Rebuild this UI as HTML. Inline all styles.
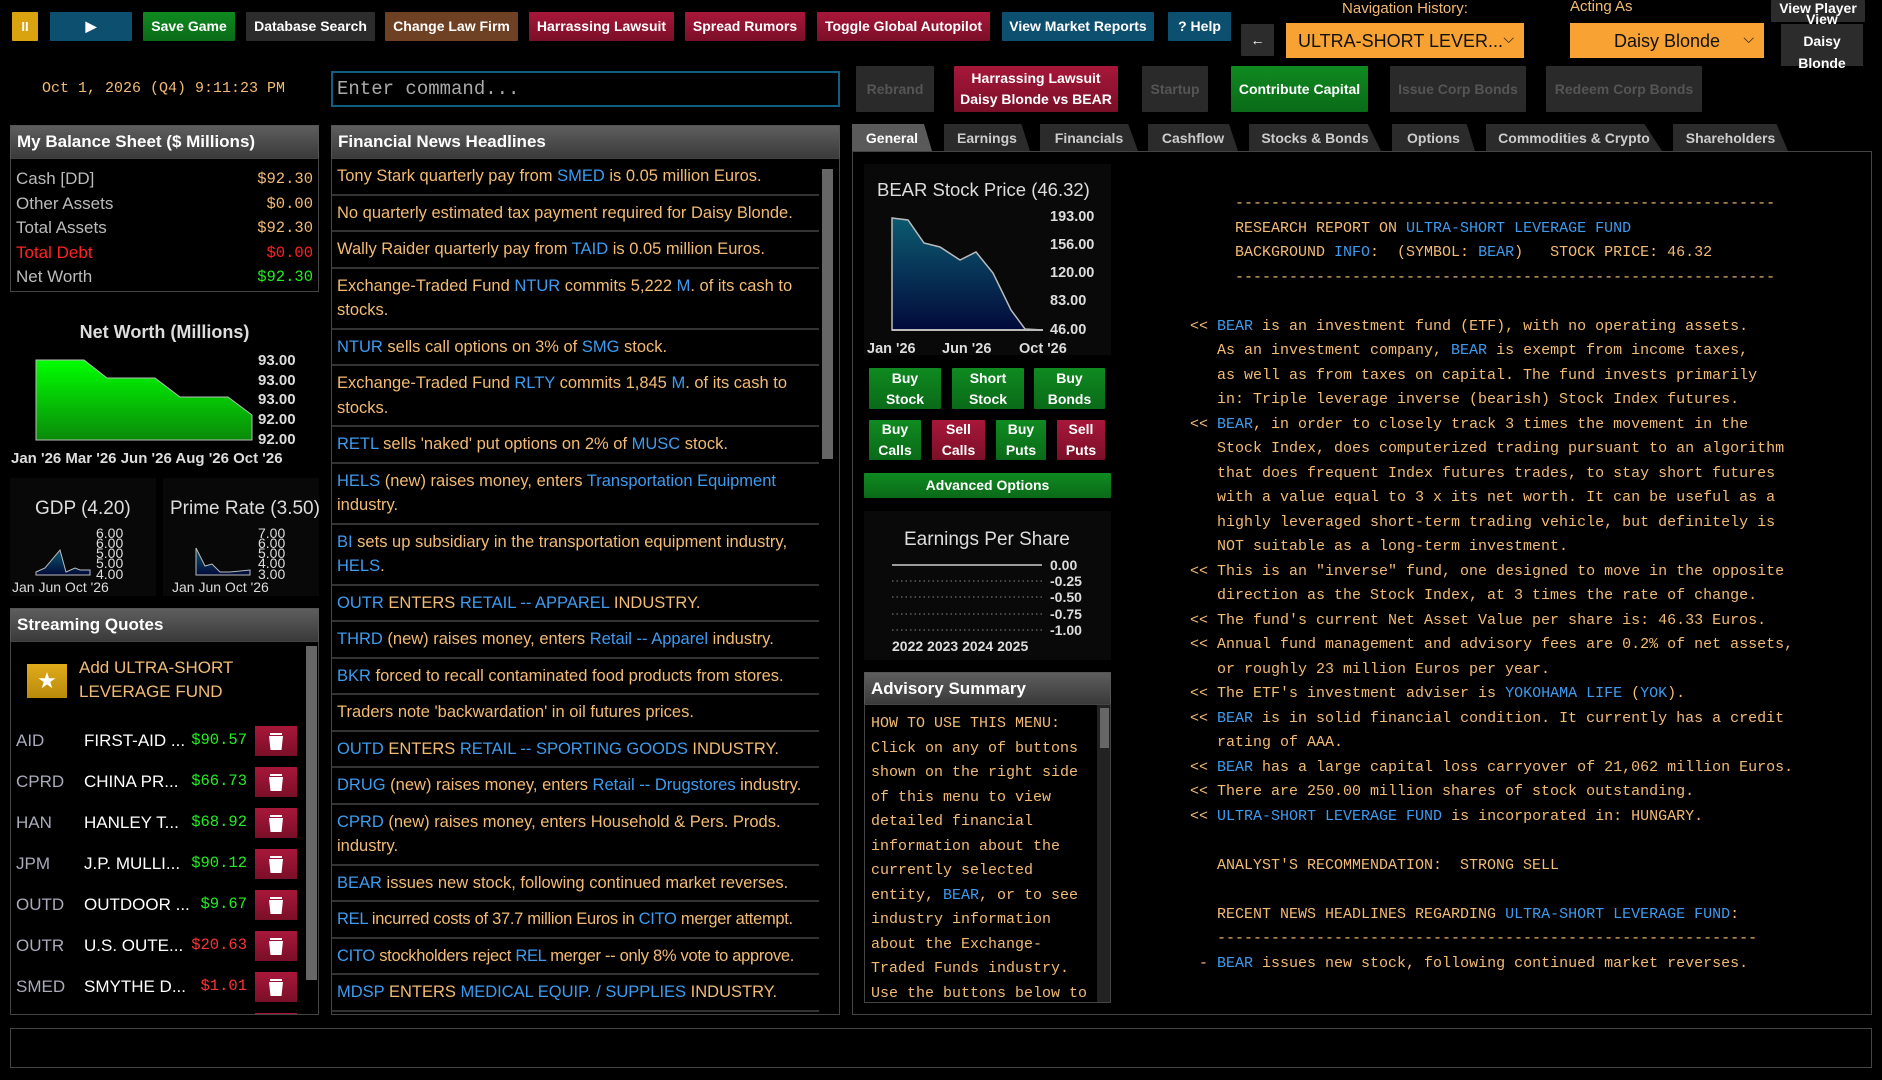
<!DOCTYPE html>
<html><head><meta charset="utf-8"><style>
*{box-sizing:border-box;margin:0;padding:0}
body{width:1882px;height:1080px;background:#000;position:relative;overflow:hidden;font-family:"Liberation Sans",sans-serif;color:#ddd}
.a{position:absolute}
.btn{position:absolute;display:flex;align-items:center;justify-content:center;text-align:center;color:#fff;font-weight:bold;font-size:14px;line-height:21px;border-radius:1px}
.red{background:linear-gradient(#a8173a,#7a0f28)}
.grn{background:linear-gradient(#0f8a20,#0a6a18)}
.gry{background:#2c2c2c}
.dis{background:#2a2a2a;color:#555}
.hdr{position:absolute;background:linear-gradient(#5e5e5e,#3a3a3a);color:#fff;font-weight:bold;font-size:17px;padding-left:6px;display:flex;align-items:center;border:1px solid #555}
.panel{position:absolute;border:1px solid #444;background:#000}
.mono{font-family:"Liberation Mono",monospace}
.o{color:#f3bb74}.b{color:#3d9cf0}
.news div{border-bottom:2px solid #333;padding:5px 5px 5px;font-size:16.5px;line-height:24.5px;color:#f3bb74}
.tab{position:absolute;top:124px;height:27px;background:#2b2b2b;color:#ccc;font-weight:bold;font-size:14px;display:flex;align-items:center;justify-content:center;clip-path:polygon(0 0,90% 0,100% 100%,0 100%)}
pre{font-family:"Liberation Mono",monospace;font-size:15px;line-height:24.5px;color:#f3bb74}
.q{position:absolute;left:0;width:300px;height:30px;font-size:17px}
.pr{position:absolute;right:64px;top:5px;font-family:"Liberation Mono",monospace;font-size:15.5px;white-space:nowrap}
.trash{position:absolute;left:254px;width:42px;height:30px;background:linear-gradient(#a8173a,#7a0f28)}
</style></head><body>
<!-- top row -->
<div class="btn" style="left:12px;top:12px;width:26px;height:29px;background:#d9a20f;font-size:13px">II</div>
<div class="btn" style="left:50px;top:12px;width:82px;height:29px;background:#0d4f6e">▶</div>
<div class="btn grn" style="left:143px;top:12px;width:92px;height:29px">Save Game</div>
<div class="btn gry" style="left:246px;top:12px;width:129px;height:29px">Database Search</div>
<div class="btn" style="left:385px;top:12px;width:133px;height:29px;background:#6e4024">Change Law Firm</div>
<div class="btn red" style="left:529px;top:12px;width:145px;height:29px">Harrassing Lawsuit</div>
<div class="btn red" style="left:685px;top:12px;width:120px;height:29px">Spread Rumors</div>
<div class="btn red" style="left:817px;top:12px;width:173px;height:29px">Toggle Global Autopilot</div>
<div class="btn" style="left:1002px;top:12px;width:152px;height:29px;background:#0d4f6e">View Market Reports</div>
<div class="btn" style="left:1168px;top:12px;width:63px;height:29px;background:#0d4f6e">? Help</div>
<div class="btn gry" style="left:1241px;top:24px;width:33px;height:32px;font-weight:normal">←</div>
<div class="a" style="left:1286px;top:0px;width:238px;text-align:center;color:#f3bb74;font-size:15px">Navigation History:</div>
<div class="a" style="left:1286px;top:23px;width:238px;height:35px;background:#f7a233;color:#111;font-size:18px;padding:8px 0 0 12px">ULTRA-SHORT LEVER...<span style="position:absolute;right:10px;top:7px;font-size:14px">⌵</span></div>
<div class="a" style="left:1570px;top:-2px;color:#f3bb74;font-size:15px">Acting As</div>
<div class="a" style="left:1570px;top:23px;width:194px;height:35px;background:#f7a233;color:#111;font-size:18px;padding-top:8px;text-align:center">Daisy Blonde<span style="position:absolute;right:10px;top:7px;font-size:14px">⌵</span></div>
<div class="btn gry" style="left:1771px;top:0;width:94px;height:22px;align-items:flex-start;line-height:16px">View Player</div>
<div class="a gry" style="left:1781px;top:24px;width:82px;height:42px"></div>
<div class="a" style="left:1781px;top:8px;width:82px;text-align:center;color:#fff;font-weight:bold;font-size:14px;line-height:22px">View<br>Daisy<br>Blonde</div>
<!-- row 2 -->
<div class="a mono" style="left:42px;top:80px;color:#f3bb74;font-size:15px">Oct 1, 2026 (Q4) 9:11:23 PM</div>
<div class="a mono" style="left:331px;top:71px;width:509px;height:36px;border:2px solid #0f5f82;color:#aaa;font-size:19px;padding:5px 4px">Enter command...</div>
<div class="btn dis" style="left:856px;top:66px;width:78px;height:46px">Rebrand</div>
<div class="btn red" style="left:954px;top:66px;width:164px;height:46px">Harrassing Lawsuit<br>Daisy Blonde vs BEAR</div>
<div class="btn dis" style="left:1142px;top:66px;width:66px;height:46px">Startup</div>
<div class="btn grn" style="left:1231px;top:66px;width:137px;height:46px">Contribute Capital</div>
<div class="btn dis" style="left:1390px;top:66px;width:136px;height:46px">Issue Corp Bonds</div>
<div class="btn dis" style="left:1546px;top:66px;width:156px;height:46px">Redeem Corp Bonds</div>

<!-- left panel -->
<div class="hdr" style="left:10px;top:125px;width:309px;height:34px">My Balance Sheet ($ Millions)</div>
<div class="panel" style="left:10px;top:158px;width:309px;height:134px;font-size:17px">
 <div class="a" style="left:5px;top:8px;color:#bbb;line-height:24.5px">Cash [DD]<br>Other Assets<br>Total Assets<br><span style="color:#f22">Total Debt</span><br>Net Worth</div>
 <div class="a mono" style="right:5px;top:8px;text-align:right;line-height:24.5px;font-size:15.5px"><span class="o">$92.30</span><br><span class="o">$0.00</span><br><span class="o">$92.30</span><br><span style="color:#f22">$0.00</span><br><span style="color:#2e2">$92.30</span></div>
</div>
<div class="a" style="left:10px;top:322px;width:309px;text-align:center;color:#ddd;font-size:18px;font-weight:bold">Net Worth (Millions)</div>
<svg class="a" style="left:0;top:340px" width="330" height="130">
<defs><linearGradient id="g1" x1="0" y1="0" x2="0" y2="1"><stop offset="0" stop-color="#0f0"/><stop offset="1" stop-color="#0a8a0a"/></linearGradient>
<linearGradient id="g2" x1="0" y1="0" x2="0" y2="1"><stop offset="0" stop-color="#0c5a70"/><stop offset="1" stop-color="#020a3a"/></linearGradient></defs>
<polygon points="36,20 84,20 107,38 155,38 180,57 228,57 252,75 252,100 36,100" fill="url(#g1)" stroke="#bbb"/>
<g fill="#ddd" font-size="15" font-family="Liberation Sans" font-weight="bold"><text x="258" y="25">93.00</text><text x="258" y="45">93.00</text><text x="258" y="64">93.00</text><text x="258" y="84">92.00</text><text x="258" y="104">92.00</text>
<text x="11" y="123">Jan '26 Mar '26 Jun '26 Aug '26 Oct '26</text></g></svg>
<div class="a" style="left:10px;top:478px;width:146px;height:118px;background:#080808"></div>
<div class="a" style="left:163px;top:478px;width:156px;height:118px;background:#080808"></div>
<svg class="a" style="left:0;top:478px" width="330" height="120">
<g fill="#ddd" font-family="Liberation Sans"><text x="35" y="36" font-size="19">GDP (4.20)</text><text x="170" y="36" font-size="19">Prime Rate (3.50)</text>
<g font-size="14"><text x="96" y="60">6.00</text><text x="96" y="70">6.00</text><text x="96" y="80">5.00</text><text x="96" y="90">5.00</text><text x="96" y="101">4.00</text>
<text x="258" y="60">7.00</text><text x="258" y="70">6.00</text><text x="258" y="80">5.00</text><text x="258" y="90">4.00</text><text x="258" y="101">3.00</text>
<text x="12" y="114">Jan Jun Oct '26</text><text x="172" y="114">Jan Jun Oct '26</text></g></g>
<polygon points="36,94 45,90 60,72 66,94 75,90 80,92 90,92 90,97 36,97" fill="url(#g2)" stroke="#bbb"/>
<polygon points="196,70 205,88 212,86 220,94 230,94 250,92 250,97 196,97" fill="url(#g2)" stroke="#bbb"/></svg>
<div class="hdr" style="left:10px;top:608px;width:309px;height:34px">Streaming Quotes</div>
<div class="panel" style="left:10px;top:641px;width:309px;height:374px;overflow:hidden">
 <div class="a" style="left:295px;top:4px;width:11px;height:334px;background:#666"></div>
 <div class="a" style="left:16px;top:22px;width:40px;height:34px;background:linear-gradient(#e0ac1a,#b98a0c);color:#fff;font-size:22px;text-align:center;line-height:34px">★</div>
 <div class="a o" style="left:68px;top:14px;font-size:17px;line-height:24px">Add ULTRA-SHORT<br>LEVERAGE FUND</div>
 <div class="a" style="top:84px;left:0;width:300px">
 <div class="q" style="top:0"><span class="a" style="left:5px;top:5px;color:#aab">AID</span><span class="a" style="left:73px;top:5px;color:#fff">FIRST-AID ...</span><span class="pr" style="color:#2e2">$90.57</span></div>
 <div class="q" style="top:41px"><span class="a" style="left:5px;top:5px;color:#aab">CPRD</span><span class="a" style="left:73px;top:5px;color:#fff">CHINA PR...</span><span class="pr" style="color:#2e2">$66.73</span></div>
 <div class="q" style="top:82px"><span class="a" style="left:5px;top:5px;color:#aab">HAN</span><span class="a" style="left:73px;top:5px;color:#fff">HANLEY T...</span><span class="pr" style="color:#2e2">$68.92</span></div>
 <div class="q" style="top:123px"><span class="a" style="left:5px;top:5px;color:#aab">JPM</span><span class="a" style="left:73px;top:5px;color:#fff">J.P. MULLI...</span><span class="pr" style="color:#2e2">$90.12</span></div>
 <div class="q" style="top:164px"><span class="a" style="left:5px;top:5px;color:#aab">OUTD</span><span class="a" style="left:73px;top:5px;color:#fff">OUTDOOR ...</span><span class="pr" style="color:#2e2">$9.67</span></div>
 <div class="q" style="top:205px"><span class="a" style="left:5px;top:5px;color:#aab">OUTR</span><span class="a" style="left:73px;top:5px;color:#fff">U.S. OUTE...</span><span class="pr" style="color:#f33">$20.63</span></div>
 <div class="q" style="top:246px"><span class="a" style="left:5px;top:5px;color:#aab">SMED</span><span class="a" style="left:73px;top:5px;color:#fff">SMYTHE D...</span><span class="pr" style="color:#f33">$1.01</span></div>
 </div>
 <div class="a" style="left:244px;top:84px">
  <div class="trash" style="left:0;top:0"></div><div class="trash" style="left:0;top:41px"></div><div class="trash" style="left:0;top:82px"></div><div class="trash" style="left:0;top:123px"></div><div class="trash" style="left:0;top:164px"></div><div class="trash" style="left:0;top:205px"></div><div class="trash" style="left:0;top:246px"></div><div class="trash" style="left:0;top:287px"></div>
  <svg class="a" style="left:0;top:0" width="42" height="320"><g fill="#fff">
  <path id="t" d="M15 7h12v2h-12zM14 10h14l-1.5 14h-11z"/>
  <use href="#t" y="41"/><use href="#t" y="82"/><use href="#t" y="123"/><use href="#t" y="164"/><use href="#t" y="205"/><use href="#t" y="246"/></g></svg>
 </div>
</div>
<div class="a" style="left:10px;top:1028px;width:1862px;height:40px;border:1px solid #444"></div>

<!-- news -->
<div class="hdr" style="left:331px;top:125px;width:509px;height:34px">Financial News Headlines</div>
<div class="panel news" style="left:331px;top:158px;width:509px;height:857px;overflow:hidden;padding-right:20px">
 <div class="a" style="left:490px;top:10px;width:11px;height:290px;background:#666;padding:0;border:0"></div>
 <div>Tony Stark quarterly pay from <span class="b">SMED</span> is 0.05 million Euros.</div>
 <div>No quarterly estimated tax payment required for Daisy Blonde.</div>
 <div>Wally Raider quarterly pay from <span class="b">TAID</span> is 0.05 million Euros.</div>
 <div>Exchange-Traded Fund <span class="b">NTUR</span> commits 5,222 <span class="b">M</span>. of its cash to stocks.</div>
 <div><span class="b">NTUR</span> sells call options on 3% of <span class="b">SMG</span> stock.</div>
 <div>Exchange-Traded Fund <span class="b">RLTY</span> commits 1,845 <span class="b">M</span>. of its cash to stocks.</div>
 <div><span class="b">RETL</span> sells 'naked' put options on 2% of <span class="b">MUSC</span> stock.</div>
 <div><span class="b">HELS</span> (new) raises money, enters <span class="b">Transportation Equipment</span> industry.</div>
 <div><span class="b">BI</span> sets up subsidiary in the transportation equipment industry, <span class="b">HELS</span>.</div>
 <div><span class="b">OUTR</span> ENTERS <span class="b">RETAIL -- APPAREL</span> INDUSTRY.</div>
 <div><span class="b">THRD</span> (new) raises money, enters <span class="b">Retail -- Apparel</span> industry.</div>
 <div><span class="b">BKR</span> forced to recall contaminated food products from stores.</div>
 <div>Traders note 'backwardation' in oil futures prices.</div>
 <div><span class="b">OUTD</span> ENTERS <span class="b">RETAIL -- SPORTING GOODS</span> INDUSTRY.</div>
 <div style="white-space:nowrap"><span class="b">DRUG</span> (new) raises money, enters <span class="b">Retail -- Drugstores</span> industry.</div>
 <div><span class="b">CPRD</span> (new) raises money, enters Household &amp; Pers. Prods. industry.</div>
 <div><span class="b">BEAR</span> issues new stock, following continued market reverses.</div>
 <div style="white-space:nowrap;letter-spacing:-0.3px"><span class="b">REL</span> incurred costs of 37.7 million Euros in <span class="b">CITO</span> merger attempt.</div>
 <div style="white-space:nowrap;letter-spacing:-0.3px"><span class="b">CITO</span> stockholders reject <span class="b">REL</span> merger -- only 8% vote to approve.</div>
 <div><span class="b">MDSP</span> ENTERS <span class="b">MEDICAL EQUIP. / SUPPLIES</span> INDUSTRY.</div>
</div>

<!-- right panel -->
<div class="tab" style="left:852px;width:80px;background:#5a5a5a;color:#fff">General</div>
<div class="tab" style="left:944px;width:86px">Earnings</div>
<div class="tab" style="left:1040px;width:98px">Financials</div>
<div class="tab" style="left:1148px;width:90px">Cashflow</div>
<div class="tab" style="left:1249px;width:132px">Stocks &amp; Bonds</div>
<div class="tab" style="left:1392px;width:83px">Options</div>
<div class="tab" style="left:1486px;width:176px">Commodities &amp; Crypto</div>
<div class="tab" style="left:1673px;width:115px">Shareholders</div>
<div class="panel" style="left:852px;top:151px;width:1020px;height:864px"></div>
<div class="a" style="left:864px;top:164px;width:247px;height:191px;background:#090909"></div>
<svg class="a" style="left:852px;top:164px" width="270" height="200">
<polygon points="40,54 56,56 72,79 88,83 108,96 124,88 141,109 159,146 173,165 191,166 191,166 40,166" fill="url(#g2)" stroke="#bbb" stroke-width="1.5"/>
<line x1="40" y1="166" x2="191" y2="166" stroke="#bbb" stroke-width="2"/>
<g fill="#ddd" font-family="Liberation Sans"><text x="25" y="32" font-size="18.5">BEAR Stock Price (46.32)</text>
<g font-size="14.5" font-weight="bold"><text x="198" y="57">193.00</text><text x="198" y="85">156.00</text><text x="198" y="113">120.00</text><text x="198" y="141">83.00</text><text x="198" y="170">46.00</text>
<text x="15" y="189">Jan '26</text><text x="90" y="189">Jun '26</text><text x="167" y="189">Oct '26</text></g></g></svg>
<div class="btn grn" style="left:869px;top:368px;width:72px;height:41px">Buy<br>Stock</div>
<div class="btn grn" style="left:952px;top:368px;width:72px;height:41px">Short<br>Stock</div>
<div class="btn grn" style="left:1034px;top:368px;width:71px;height:41px">Buy<br>Bonds</div>
<div class="btn grn" style="left:869px;top:420px;width:52px;height:40px">Buy<br>Calls</div>
<div class="btn red" style="left:932px;top:420px;width:53px;height:40px">Sell<br>Calls</div>
<div class="btn grn" style="left:996px;top:420px;width:50px;height:40px">Buy<br>Puts</div>
<div class="btn red" style="left:1057px;top:420px;width:48px;height:40px">Sell<br>Puts</div>
<div class="btn grn" style="left:864px;top:473px;width:247px;height:25px">Advanced Options</div>
<div class="a" style="left:864px;top:511px;width:247px;height:149px;background:#090909"></div>
<svg class="a" style="left:852px;top:511px" width="270" height="150">
<g fill="#ddd" font-family="Liberation Sans"><text x="52" y="34" font-size="19">Earnings Per Share</text>
<g font-size="14" font-weight="bold"><text x="198" y="59">0.00</text><text x="198" y="75">-0.25</text><text x="198" y="91">-0.50</text><text x="198" y="108">-0.75</text><text x="198" y="124">-1.00</text>
<text x="40" y="140">2022 2023 2024 2025</text></g></g>
<g stroke="#888" stroke-dasharray="1.5 3"><line x1="40" y1="70" x2="190" y2="70"/><line x1="40" y1="86" x2="190" y2="86"/><line x1="40" y1="103" x2="190" y2="103"/><line x1="40" y1="119" x2="190" y2="119"/></g>
<line x1="40" y1="54" x2="190" y2="54" stroke="#ccc" stroke-width="1.5"/></svg>
<div class="hdr" style="left:864px;top:672px;width:247px;height:33px">Advisory Summary</div>
<div class="panel" style="left:864px;top:704px;width:247px;height:299px;overflow:hidden">
 <div class="a" style="left:232px;top:0;width:14px;height:299px;background:#222"></div>
 <div class="a" style="left:235px;top:3px;width:9px;height:40px;background:#666"></div>
 <pre style="position:absolute;left:6px;top:7px">HOW TO USE THIS MENU:
Click on any of buttons
shown on the right side
of this menu to view
detailed financial
information about the
currently selected
entity, <span class="b">BEAR</span>, or to see
industry information
about the Exchange-
Traded Funds industry.
Use the buttons below to</pre>
</div>
<pre class="a" style="left:1190px;top:192px">     ------------------------------------------------------------
     RESEARCH REPORT ON <span class="b">ULTRA-SHORT LEVERAGE FUND</span>
     BACKGROUND <span class="b">INFO</span>:  (SYMBOL: <span class="b">BEAR</span>)   STOCK PRICE: 46.32
     ------------------------------------------------------------

<< <span class="b">BEAR</span> is an investment fund (ETF), with no operating assets.
   As an investment company, <span class="b">BEAR</span> is exempt from income taxes,
   as well as from taxes on capital. The fund invests primarily
   in: Triple leverage inverse (bearish) Stock Index futures.
<< <span class="b">BEAR</span>, in order to closely track 3 times the movement in the
   Stock Index, does computerized trading pursuant to an algorithm
   that does frequent Index futures trades, to stay short futures
   with a value equal to 3 x its net worth. It can be useful as a
   highly leveraged short-term trading vehicle, but definitely is
   NOT suitable as a long-term investment.
<< This is an "inverse" fund, one designed to move in the opposite
   direction as the Stock Index, at 3 times the rate of change.
<< The fund's current Net Asset Value per share is: 46.33 Euros.
<< Annual fund management and advisory fees are 0.2% of net assets,
   or roughly 23 million Euros per year.
<< The ETF's investment adviser is <span class="b">YOKOHAMA LIFE</span> (<span class="b">YOK</span>).
<< <span class="b">BEAR</span> is in solid financial condition. It currently has a credit
   rating of AAA.
<< <span class="b">BEAR</span> has a large capital loss carryover of 21,062 million Euros.
<< There are 250.00 million shares of stock outstanding.
<< <span class="b">ULTRA-SHORT LEVERAGE FUND</span> is incorporated in: HUNGARY.

   ANALYST'S RECOMMENDATION:  STRONG SELL

   RECENT NEWS HEADLINES REGARDING <span class="b">ULTRA-SHORT LEVERAGE FUND</span>:
   ------------------------------------------------------------
 - <span class="b">BEAR</span> issues new stock, following continued market reverses.</pre>
</body></html>
